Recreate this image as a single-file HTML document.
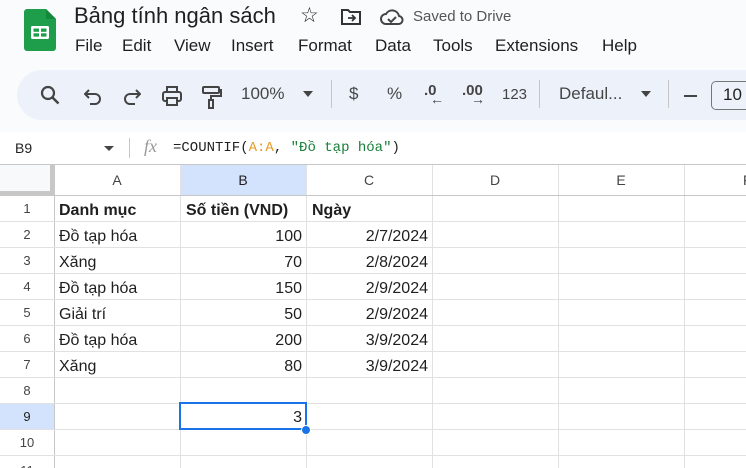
<!DOCTYPE html>
<html><head><meta charset="utf-8"><style>
*{margin:0;padding:0;box-sizing:border-box}
html,body{width:746px;height:468px;overflow:hidden}
body{background:#f9fbfd;font-family:"Liberation Sans",Arial,sans-serif;color:#1f1f1f;position:relative}
.a{position:absolute;white-space:nowrap}
.menu{top:36px;font-size:17px}
.tb{top:84px;font-size:17px;color:#444746}
.grid{position:absolute;left:0;top:165px;width:746px;height:303px;background:#fff;overflow:hidden}
.cell{position:absolute;font-size:16px;line-height:26px;height:26px;top:0}
.vl{position:absolute;top:0;width:1px;height:303px;background:#e1e1e1}
.hl{position:absolute;left:0;height:1px;width:746px;background:#e1e1e1}
.rh{position:absolute;left:0;width:54px;text-align:center;font-size:13px;color:#444;line-height:26px}
.ch{position:absolute;top:0;height:30px;line-height:30px;text-align:center;font-size:14px;color:#444;width:126px}
</style></head><body>
<svg class="a" style="left:24px;top:9px" width="32" height="42" viewBox="0 0 32 42"><path d="M3 0h19l10 10v29a3 3 0 0 1-3 3H3a3 3 0 0 1-3-3V3a3 3 0 0 1 3-3z" fill="#1e9e4a"/><path d="M22 0v10h10z" fill="#138a3b"/><rect x="7" y="17" width="18" height="13" rx="1.5" fill="#fff"/><rect x="9.5" y="19.5" width="5.5" height="3.3" fill="#1e9e4a"/><rect x="17" y="19.5" width="5.5" height="3.3" fill="#1e9e4a"/><rect x="9.5" y="24.3" width="5.5" height="3.3" fill="#1e9e4a"/><rect x="17" y="24.3" width="5.5" height="3.3" fill="#1e9e4a"/></svg>
<div class="a" style="left:74px;top:3px;font-size:22px">Bảng tính ngân sách</div>
<div class="a" style="left:300px;top:3px;font-size:21px">☆</div>
<svg class="a" style="left:340px;top:8px" width="22" height="18" viewBox="0 0 22 18"><path d="M2 2h6l2 2h10v12H2z" fill="none" stroke="#333" stroke-width="2"/><path d="M8 10h7M12 7l3 3-3 3" fill="none" stroke="#333" stroke-width="1.8"/></svg>
<svg class="a" style="left:380px;top:8px" width="24" height="18" viewBox="0 0 24 18"><path d="M6 16a5 5 0 0 1 0-10 7 7 0 0 1 13 2 4 4 0 0 1-1 8z" fill="none" stroke="#444" stroke-width="2"/><path d="M8 11l3 3 5-5" fill="none" stroke="#444" stroke-width="2"/></svg>
<div class="a" style="left:413px;top:8px;font-size:15px;color:#555">Saved to Drive</div>
<div class="a menu" style="left:75px">File</div>
<div class="a menu" style="left:122px">Edit</div>
<div class="a menu" style="left:174px">View</div>
<div class="a menu" style="left:231px">Insert</div>
<div class="a menu" style="left:298px">Format</div>
<div class="a menu" style="left:375px">Data</div>
<div class="a menu" style="left:433px">Tools</div>
<div class="a menu" style="left:495px">Extensions</div>
<div class="a menu" style="left:602px">Help</div>
<div class="a" style="left:17px;top:70px;width:760px;height:50px;border-radius:25px;background:#edf2fa"></div>
<svg class="a" style="left:40px;top:85px" width="22" height="22" viewBox="0 0 22 22"><circle cx="8" cy="8" r="6" fill="none" stroke="#444" stroke-width="2.2"/><path d="M12.5 12.5l6 6" stroke="#444" stroke-width="2.5"/></svg>
<svg class="a" style="left:84px;top:88px" width="20" height="18" viewBox="0 0 20 18"><path d="M5 2L1 6l4 4M1 6h10a5 5 0 0 1 0 10H6" fill="none" stroke="#444" stroke-width="2"/></svg>
<svg class="a" style="left:121px;top:88px" width="20" height="18" viewBox="0 0 20 18"><path d="M15 2l4 4-4 4M19 6H9a5 5 0 0 0 0 10h5" fill="none" stroke="#444" stroke-width="2"/></svg>
<svg class="a" style="left:161px;top:85px" width="22" height="22" viewBox="0 0 22 22"><rect x="2" y="7" width="18" height="9" rx="2" fill="none" stroke="#444" stroke-width="2"/><rect x="6" y="2" width="10" height="5" fill="none" stroke="#444" stroke-width="2"/><rect x="6" y="13" width="10" height="7" fill="#edf2fa" stroke="#444" stroke-width="2"/></svg>
<svg class="a" style="left:200px;top:85px" width="22" height="24" viewBox="0 0 22 24"><rect x="3" y="2" width="16" height="6" rx="1" fill="none" stroke="#444" stroke-width="2"/><path d="M19 5h2v6H11v4" fill="none" stroke="#444" stroke-width="2"/><rect x="9" y="15" width="4" height="8" fill="none" stroke="#444" stroke-width="2"/></svg>
<div class="a tb" style="left:241px">100%</div>
<div class="a" style="left:303px;top:91px;border:5px solid transparent;border-top:6px solid #444;width:0;height:0"></div>
<div class="a" style="left:331px;top:80px;width:1px;height:28px;background:#c7c7c7"></div>
<div class="a tb" style="left:349px">$</div>
<div class="a tb" style="left:387px">%</div>
<div class="a" style="left:424px;top:82px;font-size:15px;font-weight:bold;color:#444">.0</div>
<div class="a" style="left:430px;top:91px;font-size:14px;font-weight:bold;color:#444">←</div>
<div class="a" style="left:462px;top:82px;font-size:15px;font-weight:bold;color:#444">.00</div>
<div class="a" style="left:471px;top:91px;font-size:14px;font-weight:bold;color:#444">→</div>
<div class="a" style="left:502px;top:86px;font-size:15px;color:#444">123</div>
<div class="a" style="left:539px;top:80px;width:1px;height:28px;background:#c7c7c7"></div>
<div class="a tb" style="left:559px">Defaul...</div>
<div class="a" style="left:641px;top:91px;border:5px solid transparent;border-top:6px solid #444;width:0;height:0"></div>
<div class="a" style="left:668px;top:80px;width:1px;height:28px;background:#c7c7c7"></div>
<div class="a" style="left:684px;top:95px;width:13px;height:2px;background:#444"></div>
<div class="a" style="left:711px;top:81px;width:50px;height:29px;border:1px solid #747775;border-radius:5px;font-size:17px;padding:3px 0 0 11px;color:#1f1f1f">10</div>
<div class="a" style="left:0;top:132px;width:746px;height:33px;background:#fff;border-bottom:1px solid #c7c7c7"></div>
<div class="a" style="left:15px;top:140px;font-size:14px">B9</div>
<div class="a" style="left:104px;top:146px;border:5px solid transparent;border-top:5px solid #444;width:0;height:0"></div>
<div class="a" style="left:129px;top:138px;width:1px;height:20px;background:#c7c7c7"></div>
<div class="a" style="left:144px;top:136px;font-size:18px;font-style:italic;font-family:'Liberation Serif',serif;color:#999">fx</div>
<div class="a" style="left:173px;top:140px;font-size:14px;font-family:'Liberation Mono',monospace">=COUNTIF(<span style="color:#e69a24">A:A</span>, <span style="color:#188038">"Đồ tạp hóa"</span>)</div>
<div class="grid">
<div class="a" style="left:0;top:0;width:54px;height:30px;background:#f8f9fa"></div>
<div class="a" style="left:180px;top:0;width:126px;height:30px;background:#d3e3fd"></div>
<div class="a" style="left:0;top:238px;width:54px;height:26px;background:#d3e3fd"></div>
<div class="a" style="left:50px;top:0;width:4px;height:30px;background:#c7c7c7"></div>
<div class="a" style="left:0;top:26px;width:54px;height:4px;background:#c7c7c7"></div>
<div class="vl" style="left:54px;background:#c7c7c7"></div>
<div class="vl" style="left:180px"></div><div class="vl" style="left:306px"></div><div class="vl" style="left:432px"></div><div class="vl" style="left:558px"></div><div class="vl" style="left:684px"></div>
<div class="hl" style="top:30px;background:#c7c7c7"></div>
<div class="hl" style="top:56px"></div><div class="hl" style="top:82px"></div><div class="hl" style="top:108px"></div><div class="hl" style="top:134px"></div><div class="hl" style="top:160px"></div><div class="hl" style="top:186px"></div><div class="hl" style="top:212px"></div><div class="hl" style="top:238px"></div><div class="hl" style="top:264px"></div><div class="hl" style="top:290px"></div>
<div class="ch" style="left:54px">A</div><div class="ch" style="left:180px;color:#1f1f1f">B</div><div class="ch" style="left:306px">C</div><div class="ch" style="left:432px">D</div><div class="ch" style="left:558px">E</div><div class="ch" style="left:684px;text-align:left;padding-left:59px">F</div>
<div class="rh" style="top:31px">1</div><div class="rh" style="top:57px">2</div><div class="rh" style="top:83px">3</div><div class="rh" style="top:109px">4</div><div class="rh" style="top:135px">5</div><div class="rh" style="top:161px">6</div><div class="rh" style="top:187px">7</div><div class="rh" style="top:213px">8</div><div class="rh" style="top:239px;color:#1f1f1f">9</div><div class="rh" style="top:265px">10</div><div class="rh" style="top:293px">11</div>
<div class="cell" style="left:59px;top:33px;font-weight:bold">Danh mục</div>
<div class="cell" style="left:186px;top:33px;font-weight:bold">Số tiền (VND)</div>
<div class="cell" style="left:312px;top:33px;font-weight:bold">Ngày</div>
<div class="cell" style="left:59px;top:59px">Đồ tạp hóa</div>
<div class="cell" style="left:59px;top:85px">Xăng</div>
<div class="cell" style="left:59px;top:111px">Đồ tạp hóa</div>
<div class="cell" style="left:59px;top:137px">Giải trí</div>
<div class="cell" style="left:59px;top:163px">Đồ tạp hóa</div>
<div class="cell" style="left:59px;top:189px">Xăng</div>
<div class="cell" style="right:444px;top:59px">100</div>
<div class="cell" style="right:444px;top:85px">70</div>
<div class="cell" style="right:444px;top:111px">150</div>
<div class="cell" style="right:444px;top:137px">50</div>
<div class="cell" style="right:444px;top:163px">200</div>
<div class="cell" style="right:444px;top:189px">80</div>
<div class="cell" style="right:318px;top:59px">2/7/2024</div>
<div class="cell" style="right:318px;top:85px">2/8/2024</div>
<div class="cell" style="right:318px;top:111px">2/9/2024</div>
<div class="cell" style="right:318px;top:137px">2/9/2024</div>
<div class="cell" style="right:318px;top:163px">3/9/2024</div>
<div class="cell" style="right:318px;top:189px">3/9/2024</div>
<div class="a" style="left:179px;top:237px;width:128px;height:28px;border:2px solid #1a73e8"></div>
<div class="cell" style="right:444px;top:240px">3</div>
<div class="a" style="left:301px;top:260px;width:10px;height:10px;border-radius:50%;background:#1a73e8;border:1px solid #fff"></div>
</div>
</body></html>
